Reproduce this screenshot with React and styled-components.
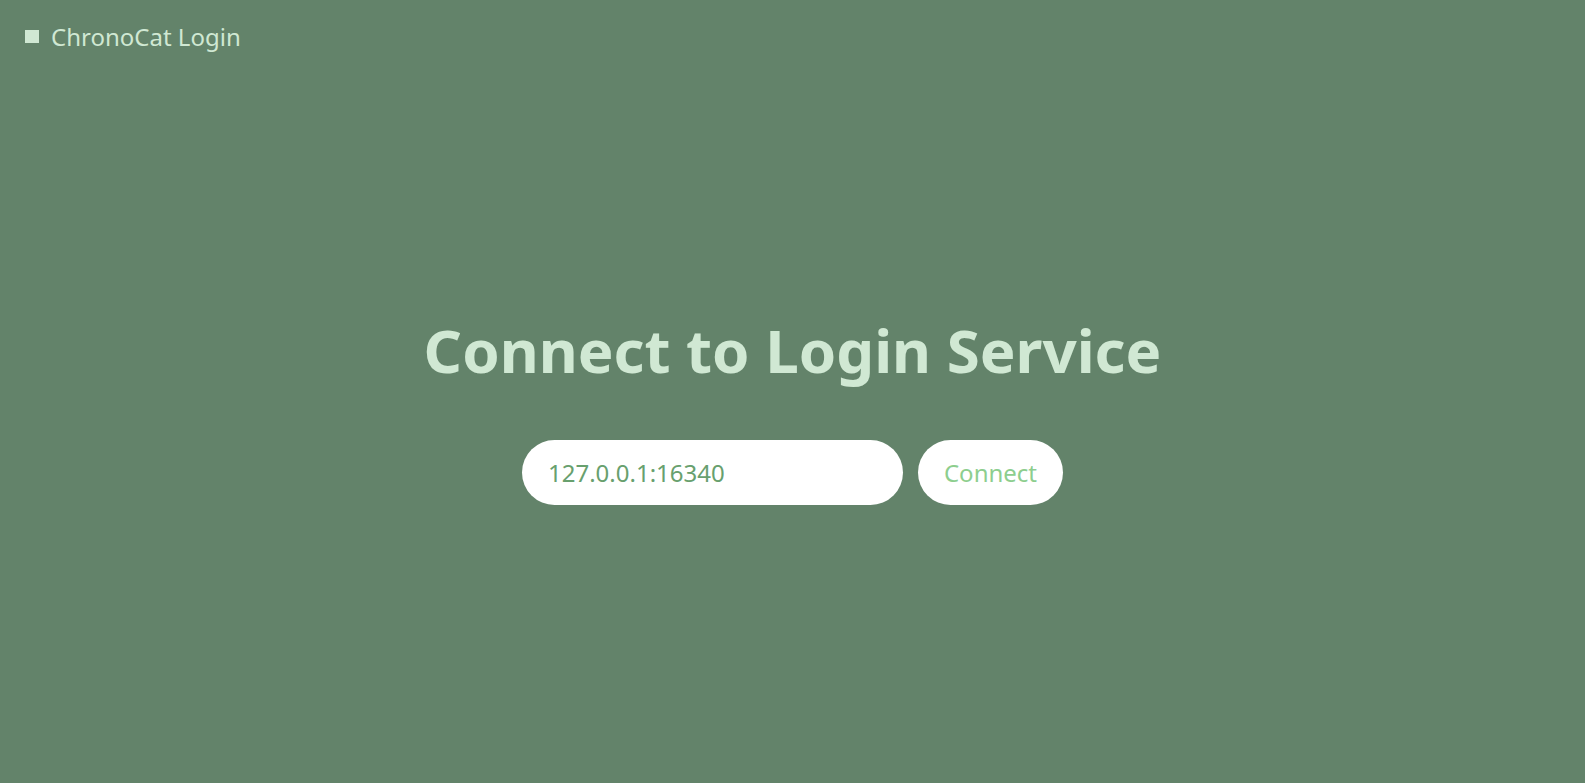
import React from "react";
import styled, { createGlobalStyle } from "styled-components";

const Global = createGlobalStyle`
  html, body { margin: 0; padding: 0; }
  body {
    background: #63836a;
    font-family: "Noto Sans", "Open Sans", sans-serif;
  }
`;

const Page = styled.div`
  min-height: 100vh;
  display: flex;
  flex-direction: column;
  background: #63836a;
  color: #d0e8d3;
`;

const Header = styled.header`
  display: flex;
  align-items: center;
  gap: 12px;
  padding: 20px 25px 0;
  font-size: 24px;
  line-height: 33px;
`;

const Mark = styled.span`
  width: 14px;
  height: 13px;
  background: #d0e8d3;
  display: block;
`;

const Main = styled.main`
  display: flex;
  flex-direction: column;
  align-items: center;
  padding-top: 261px;
`;

const Title = styled.h1`
  margin: 0;
  font-size: 60px;
  line-height: 72px;
  font-weight: 700;
  color: #d0e8d3;
`;

const Form = styled.form`
  display: flex;
  gap: 15px;
  margin-top: 54px;
`;

const Input = styled.input`
  width: 381px;
  height: 65px;
  box-sizing: border-box;
  border: none;
  border-radius: 33px;
  background: #ffffff;
  padding: 0 26px;
  font-family: inherit;
  font-size: 24px;
  color: #68a06e;
  outline: none;
`;

const Button = styled.button`
  height: 65px;
  width: 145px;
  border: none;
  border-radius: 33px;
  background: #ffffff;
  font-family: inherit;
  font-size: 24px;
  color: #8dce8e;
  cursor: pointer;
  padding: 0;
`;

export default function App() {
  return (
    <Page>
      <Global />
      <Header>
        <Mark />
        <span>ChronoCat Login</span>
      </Header>
      <Main>
        <Title>Connect to Login Service</Title>
        <Form onSubmit={(e) => e.preventDefault()}>
          <Input defaultValue="127.0.0.1:16340" />
          <Button type="submit">Connect</Button>
        </Form>
      </Main>
    </Page>
  );
}
